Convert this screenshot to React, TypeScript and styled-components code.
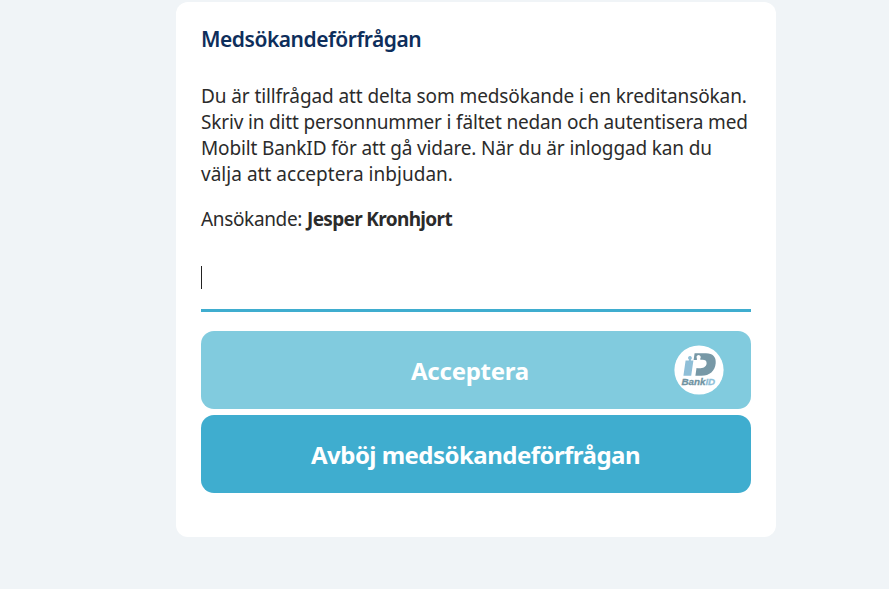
import React from "react";
import styled, { createGlobalStyle } from "styled-components";

const GlobalStyle = createGlobalStyle`
  * { box-sizing: border-box; }
  body {
    margin: 0;
    background: #f0f4f7;
    font-family: "Noto Sans", "Open Sans", sans-serif;
  }
`;

const Page = styled.main`
  display: flex;
  justify-content: center;
  align-items: flex-start;
  height: 589px;
  padding: 2px 0 0 63px;
  overflow: hidden;
`;

const Card = styled.section`
  display: flex;
  flex-direction: column;
  width: 600px;
  height: 535px;
  padding: 24px 25px 0;
  border-radius: 12px;
  background: #fff;
`;

const Title = styled.h1`
  margin: 0;
  height: 26px;
  color: #0e2e5b;
  font-size: 21px;
  font-weight: 600;
  line-height: 26px;
  letter-spacing: -0.47px;
  white-space: nowrap;
`;

const Copy = styled.p`
  margin: 31px 0 0;
  color: #2b2b2b;
  font-size: 19px;
  line-height: 26px;
`;

const Line = styled.span<{ $spacing?: number }>`
  display: block;
  white-space: nowrap;
  letter-spacing: ${({ $spacing = 0 }) => $spacing}px;
`;

const Applicant = styled.p`
  display: flex;
  gap: 5px;
  margin: 19px 0 0;
  color: #2b2b2b;
  font-size: 19px;
  line-height: 26px;
  letter-spacing: -0.35px;
  white-space: nowrap;
`;

const Name = styled.strong`
  font-weight: 700;
  letter-spacing: -0.66px;
`;

const Field = styled.div`
  display: flex;
  align-items: flex-start;
  height: 65px;
  margin: 15px 0 19px;
  padding-top: 19px;
  border-bottom: 3px solid #3fadcf;
`;

const Caret = styled.span`
  width: 1px;
  height: 23px;
  background: #222;
`;

const Actions = styled.div`
  display: grid;
  gap: 6px;
`;

const Button = styled.button<{ $muted?: boolean }>`
  display: grid;
  grid-template-columns: 77px 1fr 77px;
  align-items: center;
  height: 78px;
  padding: 0;
  border: 0;
  border-radius: 13px;
  background: ${({ $muted }) => ($muted ? "#81cbde" : "#3fadcf")};
  color: #fff;
  font: 700 24px "Noto Sans", "Open Sans", sans-serif;
  white-space: nowrap;
`;

const Label = styled.span<{ $inset?: number; $spacing: number }>`
  grid-column: 2;
  justify-self: center;
  padding-right: ${({ $inset = 0 }) => $inset}px;
  letter-spacing: ${({ $spacing }) => $spacing}px;
`;

const BankIdLogo = styled.svg`
  display: block;
  width: 50px;
  height: 50px;
`;

const BankId = () => (
  <BankIdLogo viewBox="0 0 50 50" role="img" aria-label="BankID">
    <circle cx="25" cy="25" r="24.6" fill="#fff" />
    <path
      d="M11.6 15.6h3.3v-1.2l-.7-.7a1.9 1.9 0 1 1 3.4.2l-.7.6v1.1h2.5l-2.2 15.1H9.4z"
      fill="#8fbfd8"
    />
    <path
      d="M20.6 8.3H32c7 0 10.3 3.9 9.7 9.9-.7 7.6-6 12.6-14.3 12.6h-6l1.1-7.8c5 .8 9.7-.6 10.1-4.6.3-2.5-1.6-3.6-4-3.6h-2.3v-1.3a2.1 2.1 0 1 0-3.4-.1v1.6h-3.3z"
      fill="#7798a6"
    />
    <text
      x="7.4"
      y="39.8"
      textLength="33.8"
      lengthAdjust="spacingAndGlyphs"
      fontFamily="Liberation Sans, sans-serif"
      fontSize="9.4"
      fontStyle="italic"
      fontWeight="700"
      fill="#6f93a1"
      stroke="#6f93a1"
      strokeWidth="0.3"
    >
      Bank<tspan fill="#8fbfd8" stroke="#8fbfd8">ID</tspan>
    </text>
  </BankIdLogo>
);

export default function App() {
  return (
    <>
      <GlobalStyle />
      <Page>
        <Card>
          <Title>Medsökandeförfrågan</Title>
          <Copy>
            <Line $spacing={-0.1}>Du är tillfrågad att delta som medsökande i en kreditansökan.</Line>
            <Line $spacing={-0.16}>Skriv in ditt personnummer i fältet nedan och autentisera med</Line>
            <Line $spacing={-0.14}>Mobilt BankID för att gå vidare. När du är inloggad kan du</Line>
            <Line $spacing={0.03}>välja att acceptera inbjudan.</Line>
          </Copy>
          <Applicant>
            <span>Ansökande:</span>
            <Name>Jesper Kronhjort</Name>
          </Applicant>
          <Field>
            <Caret />
          </Field>
          <Actions>
            <Button $muted>
              <Label $inset={12} $spacing={-0.25}>Acceptera</Label>
              <BankId />
            </Button>
            <Button>
              <Label $inset={1} $spacing={-0.53}>Avböj medsökandeförfrågan</Label>
            </Button>
          </Actions>
        </Card>
      </Page>
    </>
  );
}
